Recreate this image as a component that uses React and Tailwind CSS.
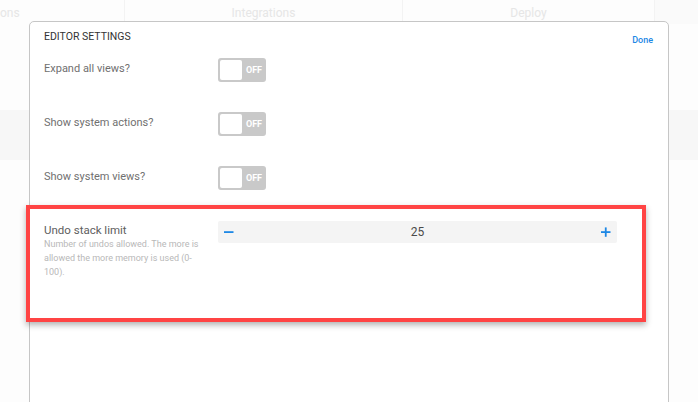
import React from "react";

function Toggle() {
  return (
    <div className="flex h-[24px] w-[48px] shrink-0 items-center rounded-[3px] bg-[#c9c9c9] pl-[2px]">
      <div className="h-[20px] w-[22px] rounded-[2px] bg-white" />
      <div className="flex-1 text-center text-[9px] font-bold leading-none text-white">OFF</div>
    </div>
  );
}

function ToggleRow({ label }) {
  return (
    <div className="flex items-start">
      <div className="mt-[4px] w-[174px] shrink-0 text-[11px] leading-[13px] text-[#707070]">{label}</div>
      <Toggle />
    </div>
  );
}

export default function App() {
  return (
    <div
      className="relative h-[402px] w-[698px] overflow-hidden bg-[#fdfdfd]"
      style={{ fontFamily: "Roboto, 'Liberation Sans', sans-serif" }}
    >
      {/* background tab bar */}
      <div className="flex h-[24px] text-[12px] leading-[14px] text-[#e6e6e6]">
        <div className="flex w-[125px] items-start border-r border-[#f3f3f3] pt-[6px]">
          <span>ons</span>
        </div>
        <div className="flex w-[278px] justify-center border-r border-[#f3f3f3] pt-[6px]">Integrations</div>
        <div className="flex w-[252px] justify-center border-r border-[#f3f3f3] pt-[6px]">Deploy</div>
        <div className="flex-1 bg-[#fafafa]" />
      </div>
      <div className="h-[86px]" />
      <div className="h-[50px] bg-[#f7f7f7]" />

      {/* modal */}
      <div className="absolute left-[29px] top-[21px] h-[420px] w-[640px] rounded-t-[5px] border border-[#c6c6c6] bg-white px-[14px] pt-[9px]">
        <div className="flex items-start justify-between">
          <div className="text-[10.5px] leading-[12px] text-[#333]">EDITOR SETTINGS</div>
          <div className="mt-[4px] pr-[1px] text-[9px] font-medium leading-[11px] text-[#1e88e5]">Done</div>
        </div>
        <div className="mt-[12px] flex flex-col gap-[30px]">
          <ToggleRow label="Expand all views?" />
          <ToggleRow label="Show system actions?" />
          <ToggleRow label="Show system views?" />
          <div className="mt-[1px] flex items-start">
            <div className="w-[174px] shrink-0 pr-[14px] pt-[2px]">
              <div className="text-[11.5px] leading-[14px] text-[#606060]">Undo stack limit</div>
              <div className="text-[9px] leading-[14px] text-[#b8b8b8]">
                Number of undos allowed. The more is allowed the more memory is used (0-100).
              </div>
            </div>
            <div className="flex h-[22px] w-[399px] items-center rounded-[2px] bg-[#f4f4f4] px-[6px]">
              <svg width="10" height="10" viewBox="0 0 10 10" className="shrink-0">
                <rect x="0" y="4.2" width="9.5" height="1.8" fill="#1e88e5" />
              </svg>
              <div className="flex-1 text-center text-[12px] leading-[14px] text-[#4a4a4a]">25</div>
              <svg width="10" height="10" viewBox="0 0 10 10" className="shrink-0">
                <rect x="0" y="4.2" width="9.5" height="1.8" fill="#1e88e5" />
                <rect x="3.85" y="0.4" width="1.8" height="9.4" fill="#1e88e5" />
              </svg>
            </div>
          </div>
        </div>
      </div>

      {/* annotation highlight */}
      <div className="absolute left-[26px] top-[205px] h-[117px] w-[620px] border-[4px] border-[#ff4444] shadow-[0_3px_6px_rgba(0,0,0,0.3)]" />
    </div>
  );
}
